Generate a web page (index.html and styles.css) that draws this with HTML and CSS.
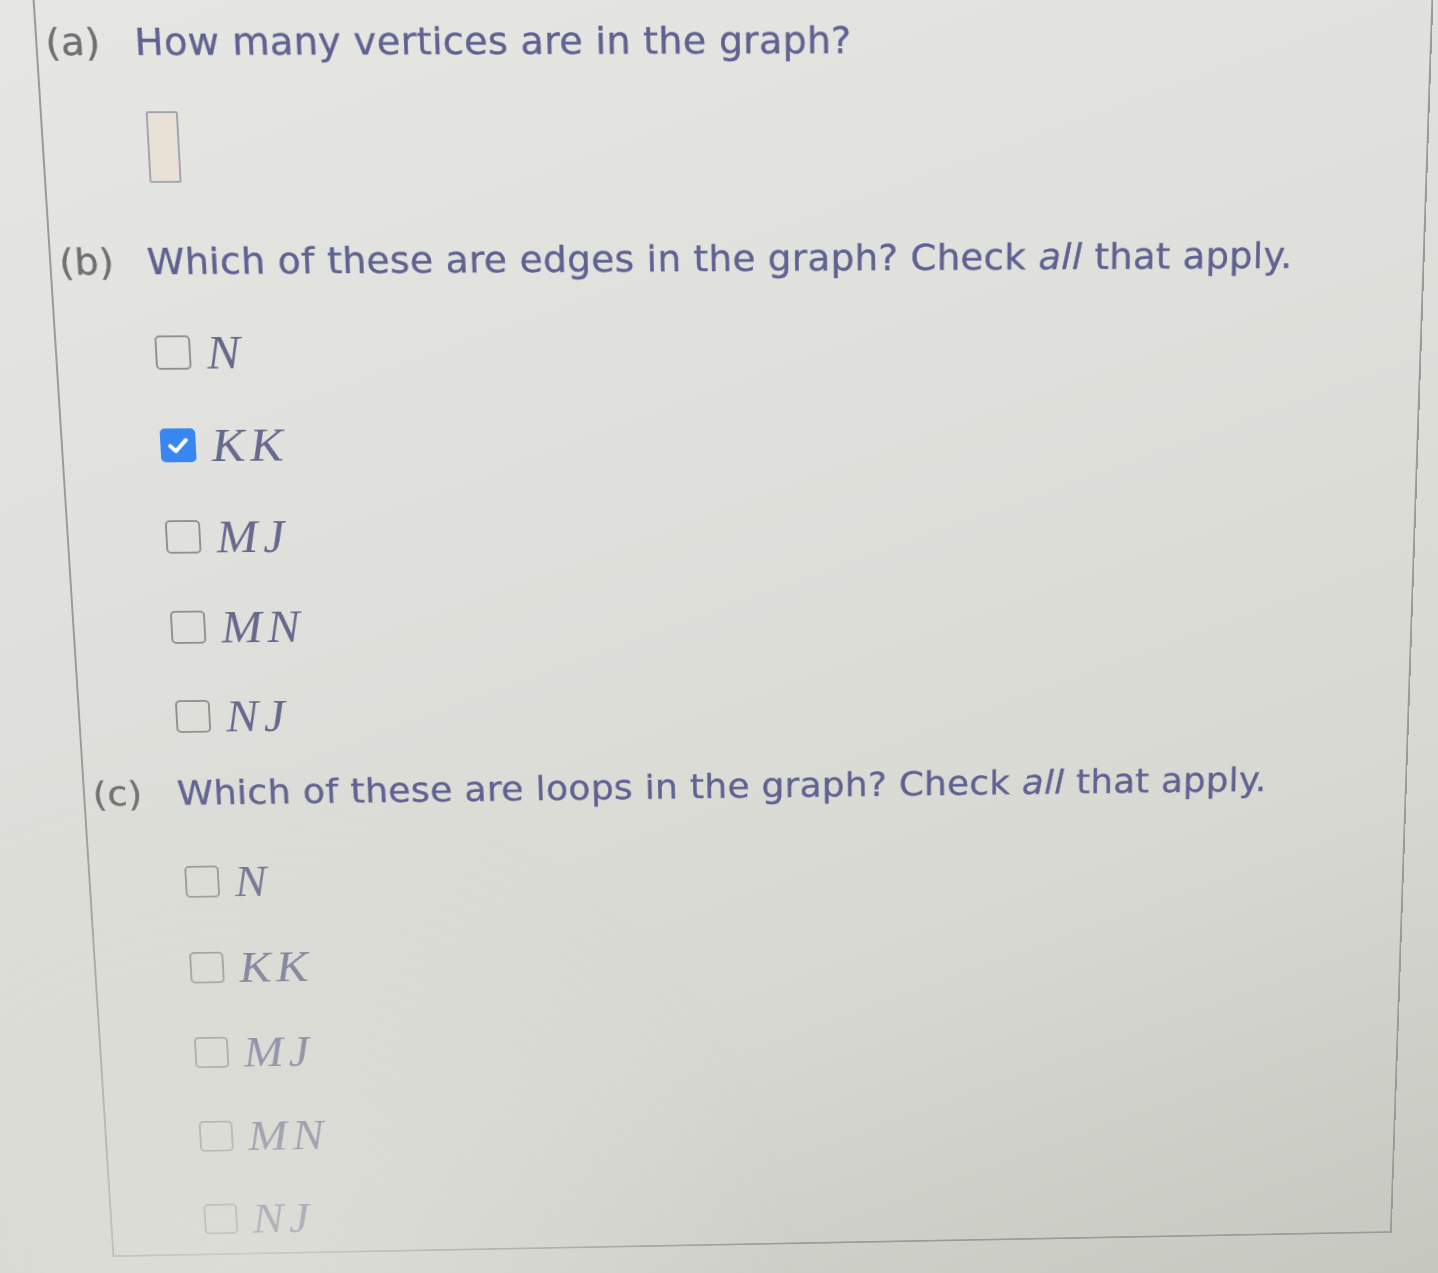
FILE: index.html
```html
<!DOCTYPE html>
<html lang="en">
<head>
<meta charset="utf-8">
<title>Graph questions</title>
<link rel="stylesheet" href="styles.css">
</head>
<body>
<div class="screen">
  <div class="question-box">
    <section class="part part-a">
      <span class="part-label">(a)</span>
      <div class="part-body">
        <p class="prompt">How many vertices are in the graph?</p>
        <input class="answer" type="text" aria-label="Number of vertices">
      </div>
    </section>

    <section class="part part-b">
      <span class="part-label">(b)</span>
      <div class="part-body">
        <p class="prompt">Which of these are edges in the graph? Check <em>all</em> that apply.</p>
        <ul class="options">
          <li class="option"><span class="box"></span><span class="math">N</span></li>
          <li class="option"><span class="box checked"><svg viewBox="0 0 24 24" class="tick"><path d="M5.5 12.5 L10 17 L18.5 7.5"/></svg></span><span class="math">KK</span></li>
          <li class="option"><span class="box"></span><span class="math">MJ</span></li>
          <li class="option"><span class="box"></span><span class="math">MN</span></li>
          <li class="option"><span class="box"></span><span class="math">NJ</span></li>
        </ul>
      </div>
    </section>

    <section class="part part-c">
      <span class="part-label">(c)</span>
      <div class="part-body">
        <p class="prompt">Which of these are loops in the graph? Check <em>all</em> that apply.</p>
        <ul class="options">
          <li class="option"><span class="box"></span><span class="math">N</span></li>
          <li class="option"><span class="box"></span><span class="math">KK</span></li>
          <li class="option"><span class="box"></span><span class="math">MJ</span></li>
          <li class="option"><span class="box"></span><span class="math">MN</span></li>
          <li class="option"><span class="box"></span><span class="math">NJ</span></li>
        </ul>
      </div>
    </section>
  </div>
</div>
</body>
</html>
```

FILE: styles.css
```css
html, body {
  margin: 0;
  padding: 0;
  overflow: hidden;
  height: 100%;
}

body {
  background: linear-gradient(160deg, #e6e7e3 0%, #dfe0db 40%, #d7d8d1 72%, #c6c7bf 100%);
  font-family: "DejaVu Sans", Verdana, sans-serif;
}

/* soft glare of the photographed screen, lying over the lower-left content */
body::after {
  content: "";
  position: fixed;
  left: 0;
  top: 0;
  width: 1438px;
  height: 1273px;
  pointer-events: none;
  background: radial-gradient(ellipse 560px 520px at 240px 1290px, rgba(222, 223, 217, 0.74) 0%, rgba(222, 223, 217, 0.4) 45%, rgba(222, 223, 217, 0) 100%);
}

.screen {
  width: 1438px;
  height: 1420px;
  transform-origin: 733px 0;
  transform: perspective(1264px) rotateX(-5deg) rotateY(1deg) skewX(0.85deg);
}

.question-box {
  margin: -20px 0 0 38px;
  width: 1403px;
  box-sizing: border-box;
  border: 2px solid #9a9b98;
  padding: 36px 0 12px 8px;
}

.part {
  display: grid;
  grid-template-columns: 88px 1fr;
  align-items: start;
}

.part-b { margin-top: 58px; }
.part-c { margin-top: 33px; }

.part-label {
  font-size: 38px;
  line-height: 46px;
  color: #707072;
  letter-spacing: 0.4px;
  -webkit-text-stroke: 0.4px currentColor;
}

.prompt {
  margin: 0;
  font-size: 38px;
  line-height: 46px;
  color: #5f6291;
  letter-spacing: 0.35px;
  white-space: nowrap;
  -webkit-text-stroke: 0.4px currentColor;
}

.prompt em {
  font-style: italic;
}

.answer {
  display: block;
  margin: 47px 0 0 7px;
  width: 32px;
  height: 73px;
  box-sizing: border-box;
  border: 2px solid #a3a6b0;
  border-radius: 2px;
  background: #e9e1d6;
  padding: 0;
}

.options {
  list-style: none;
  margin: 43px 0 0 3px;
  padding: 0;
  display: flex;
  flex-direction: column;
  gap: 40px;
}

.part-c .options { margin-top: 48px; }

.option {
  display: flex;
  align-items: center;
  gap: 16px;
  height: 58px;
}

.box {
  width: 36px;
  height: 36px;
  box-sizing: border-box;
  border: 2.5px solid #919290;
  border-radius: 5px;
  display: flex;
  align-items: center;
  justify-content: center;
  flex: none;
}

.box.checked {
  background: #3a86f0;
  border-color: #3a86f0;
}

.tick {
  width: 30px;
  height: 30px;
  fill: none;
  stroke: #ffffff;
  stroke-width: 3.2;
  stroke-linecap: round;
  stroke-linejoin: round;
}

.math {
  font-family: "Liberation Serif", "Times New Roman", serif;
  font-style: italic;
  font-size: 51px;
  line-height: 58px;
  letter-spacing: 5px;
  color: #66688c;
}
```
